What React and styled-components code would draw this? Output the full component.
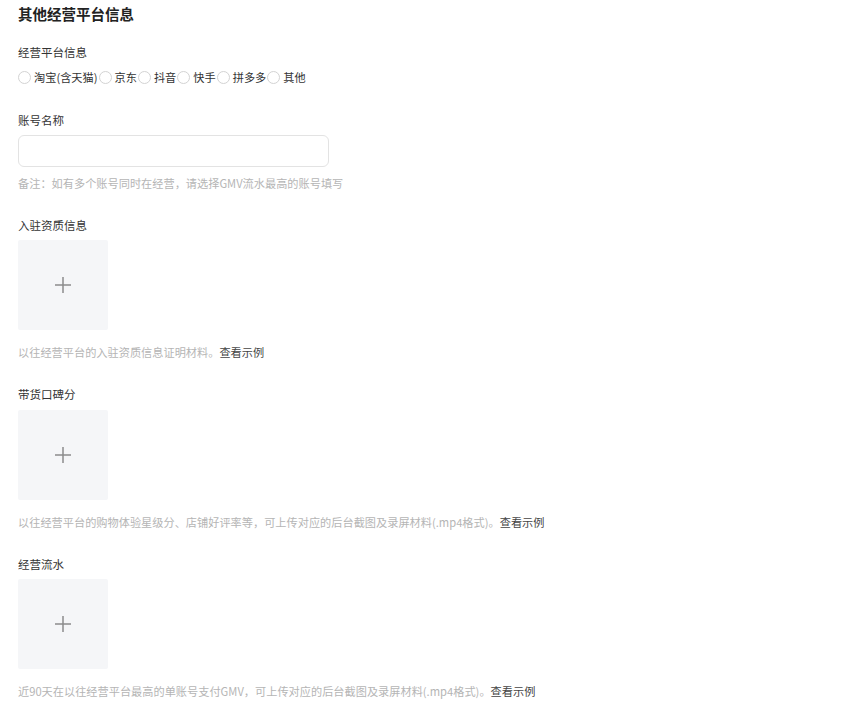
import React from "react";
import styled, { createGlobalStyle } from "styled-components";

const Global = createGlobalStyle`
  html, body { margin: 0; padding: 0; background: #fff; }
  body { font-family: "Noto Sans CJK SC", "Noto Sans", sans-serif; color: #333; }
`;

const Page = styled.div`
  padding: 4px 18px 20px 18px;
  display: flex;
  flex-direction: column;
`;

const Title = styled.h2`
  margin: 0 0 20px 0;
  font-size: 14.5px;
  line-height: 20px;
  font-weight: 700;
  color: #222;
`;

const Fields = styled.div`
  display: flex;
  flex-direction: column;
  gap: 26px;
`;

const Field = styled.div`
  display: flex;
  flex-direction: column;
  align-items: flex-start;
`;

const Label = styled.div`
  font-size: 11.5px;
  line-height: 16px;
  color: #333;
  margin-bottom: ${(p) => p.$gap ?? 7}px;
`;

const RadioRow = styled.div`
  display: flex;
  align-items: center;
  height: 16px;
  margin-bottom: 1px;
`;

const RadioItem = styled.label`
  display: flex;
  align-items: center;
  gap: 3px;
  margin-right: 1px;
  font-size: 11.2px;
  line-height: 16px;
  color: #333;
`;

const Circle = styled.span`
  box-sizing: border-box;
  width: 13px;
  height: 13px;
  border: 1px solid #d3d3d3;
  border-radius: 50%;
`;

const Input = styled.input`
  box-sizing: border-box;
  width: 311px;
  height: 32px;
  border: 1px solid #e3e3e3;
  border-radius: 6px;
  outline: none;
  padding: 0 10px;
  font-family: inherit;
`;

const Hint = styled.div`
  font-size: 11.2px;
  line-height: 16px;
  color: #b5b5b5;
  margin-top: ${(p) => p.$gap}px;
`;

const Link = styled.span`
  color: #444;
`;

const Upload = styled.div`
  width: 90px;
  height: 90px;
  background: #f5f6f8;
  border-radius: 2px;
  display: flex;
  align-items: center;
  justify-content: center;
`;

const Plus = () => (
  <svg width="18" height="18" viewBox="0 0 18 18">
    <path d="M9 1v16M1 9h16" stroke="#8c8c8c" strokeWidth="1.5" fill="none" />
  </svg>
);

const platforms = ["淘宝(含天猫)", "京东", "抖音", "快手", "拼多多", "其他"];

export default function App() {
  return (
    <>
      <Global />
      <Page>
        <Title>其他经营平台信息</Title>
        <Fields>
          <Field>
            <Label $gap={9}>经营平台信息</Label>
            <RadioRow>
              {platforms.map((p) => (
                <RadioItem key={p}>
                  <Circle />
                  {p}
                </RadioItem>
              ))}
            </RadioRow>
          </Field>
          <Field>
            <Label>账号名称</Label>
            <Input />
            <Hint $gap={8}>备注：如有多个账号同时在经营，请选择GMV流水最高的账号填写</Hint>
          </Field>
          <Field>
            <Label>入驻资质信息</Label>
            <Upload>
              <Plus />
            </Upload>
            <Hint $gap={14}>
              以往经营平台的入驻资质信息证明材料。<Link>查看示例</Link>
            </Hint>
          </Field>
          <Field>
            <Label $gap={8}>带货口碑分</Label>
            <Upload>
              <Plus />
            </Upload>
            <Hint $gap={14}>
              以往经营平台的购物体验星级分、店铺好评率等，可上传对应的后台截图及录屏材料(.mp4格式)。<Link>查看示例</Link>
            </Hint>
          </Field>
          <Field>
            <Label>经营流水</Label>
            <Upload>
              <Plus />
            </Upload>
            <Hint $gap={14}>
              近90天在以往经营平台最高的单账号支付GMV，可上传对应的后台截图及录屏材料(.mp4格式)。<Link>查看示例</Link>
            </Hint>
          </Field>
        </Fields>
      </Page>
    </>
  );
}
